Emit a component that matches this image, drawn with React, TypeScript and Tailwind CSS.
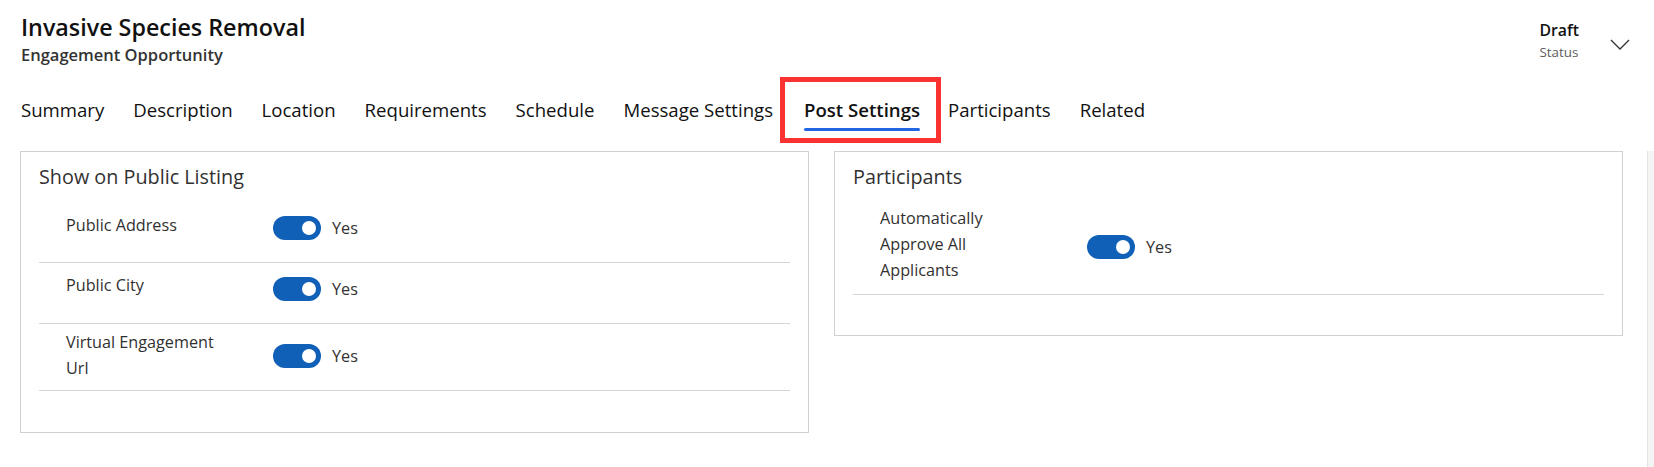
import React from "react";

function Toggle() {
  return (
    <div className="w-[48px] h-[24px] rounded-full bg-[#1160b7] flex items-center justify-end pr-[5px]">
      <div className="w-[14px] h-[14px] rounded-full bg-white" />
    </div>
  );
}

type RowProps = {
  label: React.ReactNode;
  rowH: string;
  labelPt: string;
  togglePt: string;
};

function Row({ label, rowH, labelPt, togglePt }: RowProps) {
  return (
    <div className={`flex items-start pl-[27px] border-b border-[#d6d6d6] ${rowH}`}>
      <div className={`w-[207px] shrink-0 ${labelPt}`}>
        <div className="max-w-[154px] text-[16.2px] leading-[26px] text-[#323130]">{label}</div>
      </div>
      <div className={`flex items-center gap-[11px] ${togglePt}`}>
        <Toggle />
        <span className="text-[16.2px] leading-[24px] text-[#323130]">Yes</span>
      </div>
    </div>
  );
}

const tabs = [
  "Summary",
  "Description",
  "Location",
  "Requirements",
  "Schedule",
  "Message Settings",
  "Post Settings",
  "Participants",
  "Related",
];

export default function App() {
  return (
    <div className="w-[1654px] h-[467px] bg-white overflow-hidden flex flex-col font-['Open_Sans',sans-serif] text-black">
      {/* Header */}
      <div className="flex justify-between items-start pl-[21px] pr-[24px] pt-[13px]">
        <div className="flex flex-col">
          <div className="text-[23.3px] leading-[28px] font-semibold text-[#111]">Invasive Species Removal</div>
          <div className="mt-[4px] text-[16.5px] leading-[20px] font-semibold text-[#333]">Engagement Opportunity</div>
        </div>
        <div className="flex items-start mt-[7px]">
          <div className="flex flex-col">
            <div className="text-[15.8px] leading-[20px] font-semibold text-[#111]">Draft</div>
            <div className="mt-[3px] text-[13.4px] leading-[18px] text-[#605e5c]">Status</div>
          </div>
          <svg className="ml-[31px] mt-[19px]" width="20" height="11" viewBox="0 0 20 11" fill="none">
            <path d="M1 1 L10 10 L19 1" stroke="#323130" strokeWidth="1.3" />
          </svg>
        </div>
      </div>

      {/* Tabs */}
      <div className="flex items-start pl-[21px] mt-[33px] gap-[29px]">
        {tabs.map((t) => {
          const sel = t === "Post Settings";
          return (
            <div key={t} className={`relative flex flex-col ${sel ? "mr-[-1px] ml-[2px]" : ""}`}>
              <span className={`text-[18.6px] leading-[24px] whitespace-nowrap ${sel ? "font-semibold text-[#111]" : "text-[#111]"}`}>{t}</span>
              <div className={`mt-[6px] h-[3px] rounded-full ${sel ? "bg-[#2266e3]" : "bg-transparent"}`} />
              {sel && (
                <div className="absolute -left-[24px] -right-[21px] -top-[21px] -bottom-[12px] border-[5px] border-[#fa3232]" />
              )}
            </div>
          );
        })}
      </div>

      {/* Content */}
      <div className="flex flex-1 items-start pl-[20px] mt-[20px]">
        <div className="w-[789px] border border-[#d1d1d1] pt-[12px] pb-[41px] px-[18px]">
          <div className="text-[19.8px] leading-[26px] text-[#323130]">Show on Public Listing</div>
          <div className="mt-[12px]">
            <Row label="Public Address" rowH="h-[61px]" labelPt="pt-[10px]" togglePt="pt-[14px]" />
            <Row label="Public City" rowH="h-[61px]" labelPt="pt-[9px]" togglePt="pt-[14px]" />
            <Row label="Virtual Engagement Url" rowH="h-[67px]" labelPt="pt-[5px]" togglePt="pt-[20px]" />
          </div>
        </div>
        <div className="ml-[25px] w-[789px] border border-[#d1d1d1] pt-[12px] pb-[40px] px-[18px]">
          <div className="text-[19.8px] leading-[26px] text-[#323130]">Participants</div>
          <div className="mt-[12px]">
            <Row label="Automatically Approve All Applicants" rowH="h-[93px]" labelPt="pt-[3px]" togglePt="pt-[33px]" />
          </div>
        </div>
        <div className="ml-[24px] w-[7px] self-stretch bg-[#f4f4f4] border-l border-[#e3e3e3]" />
      </div>
    </div>
  );
}
